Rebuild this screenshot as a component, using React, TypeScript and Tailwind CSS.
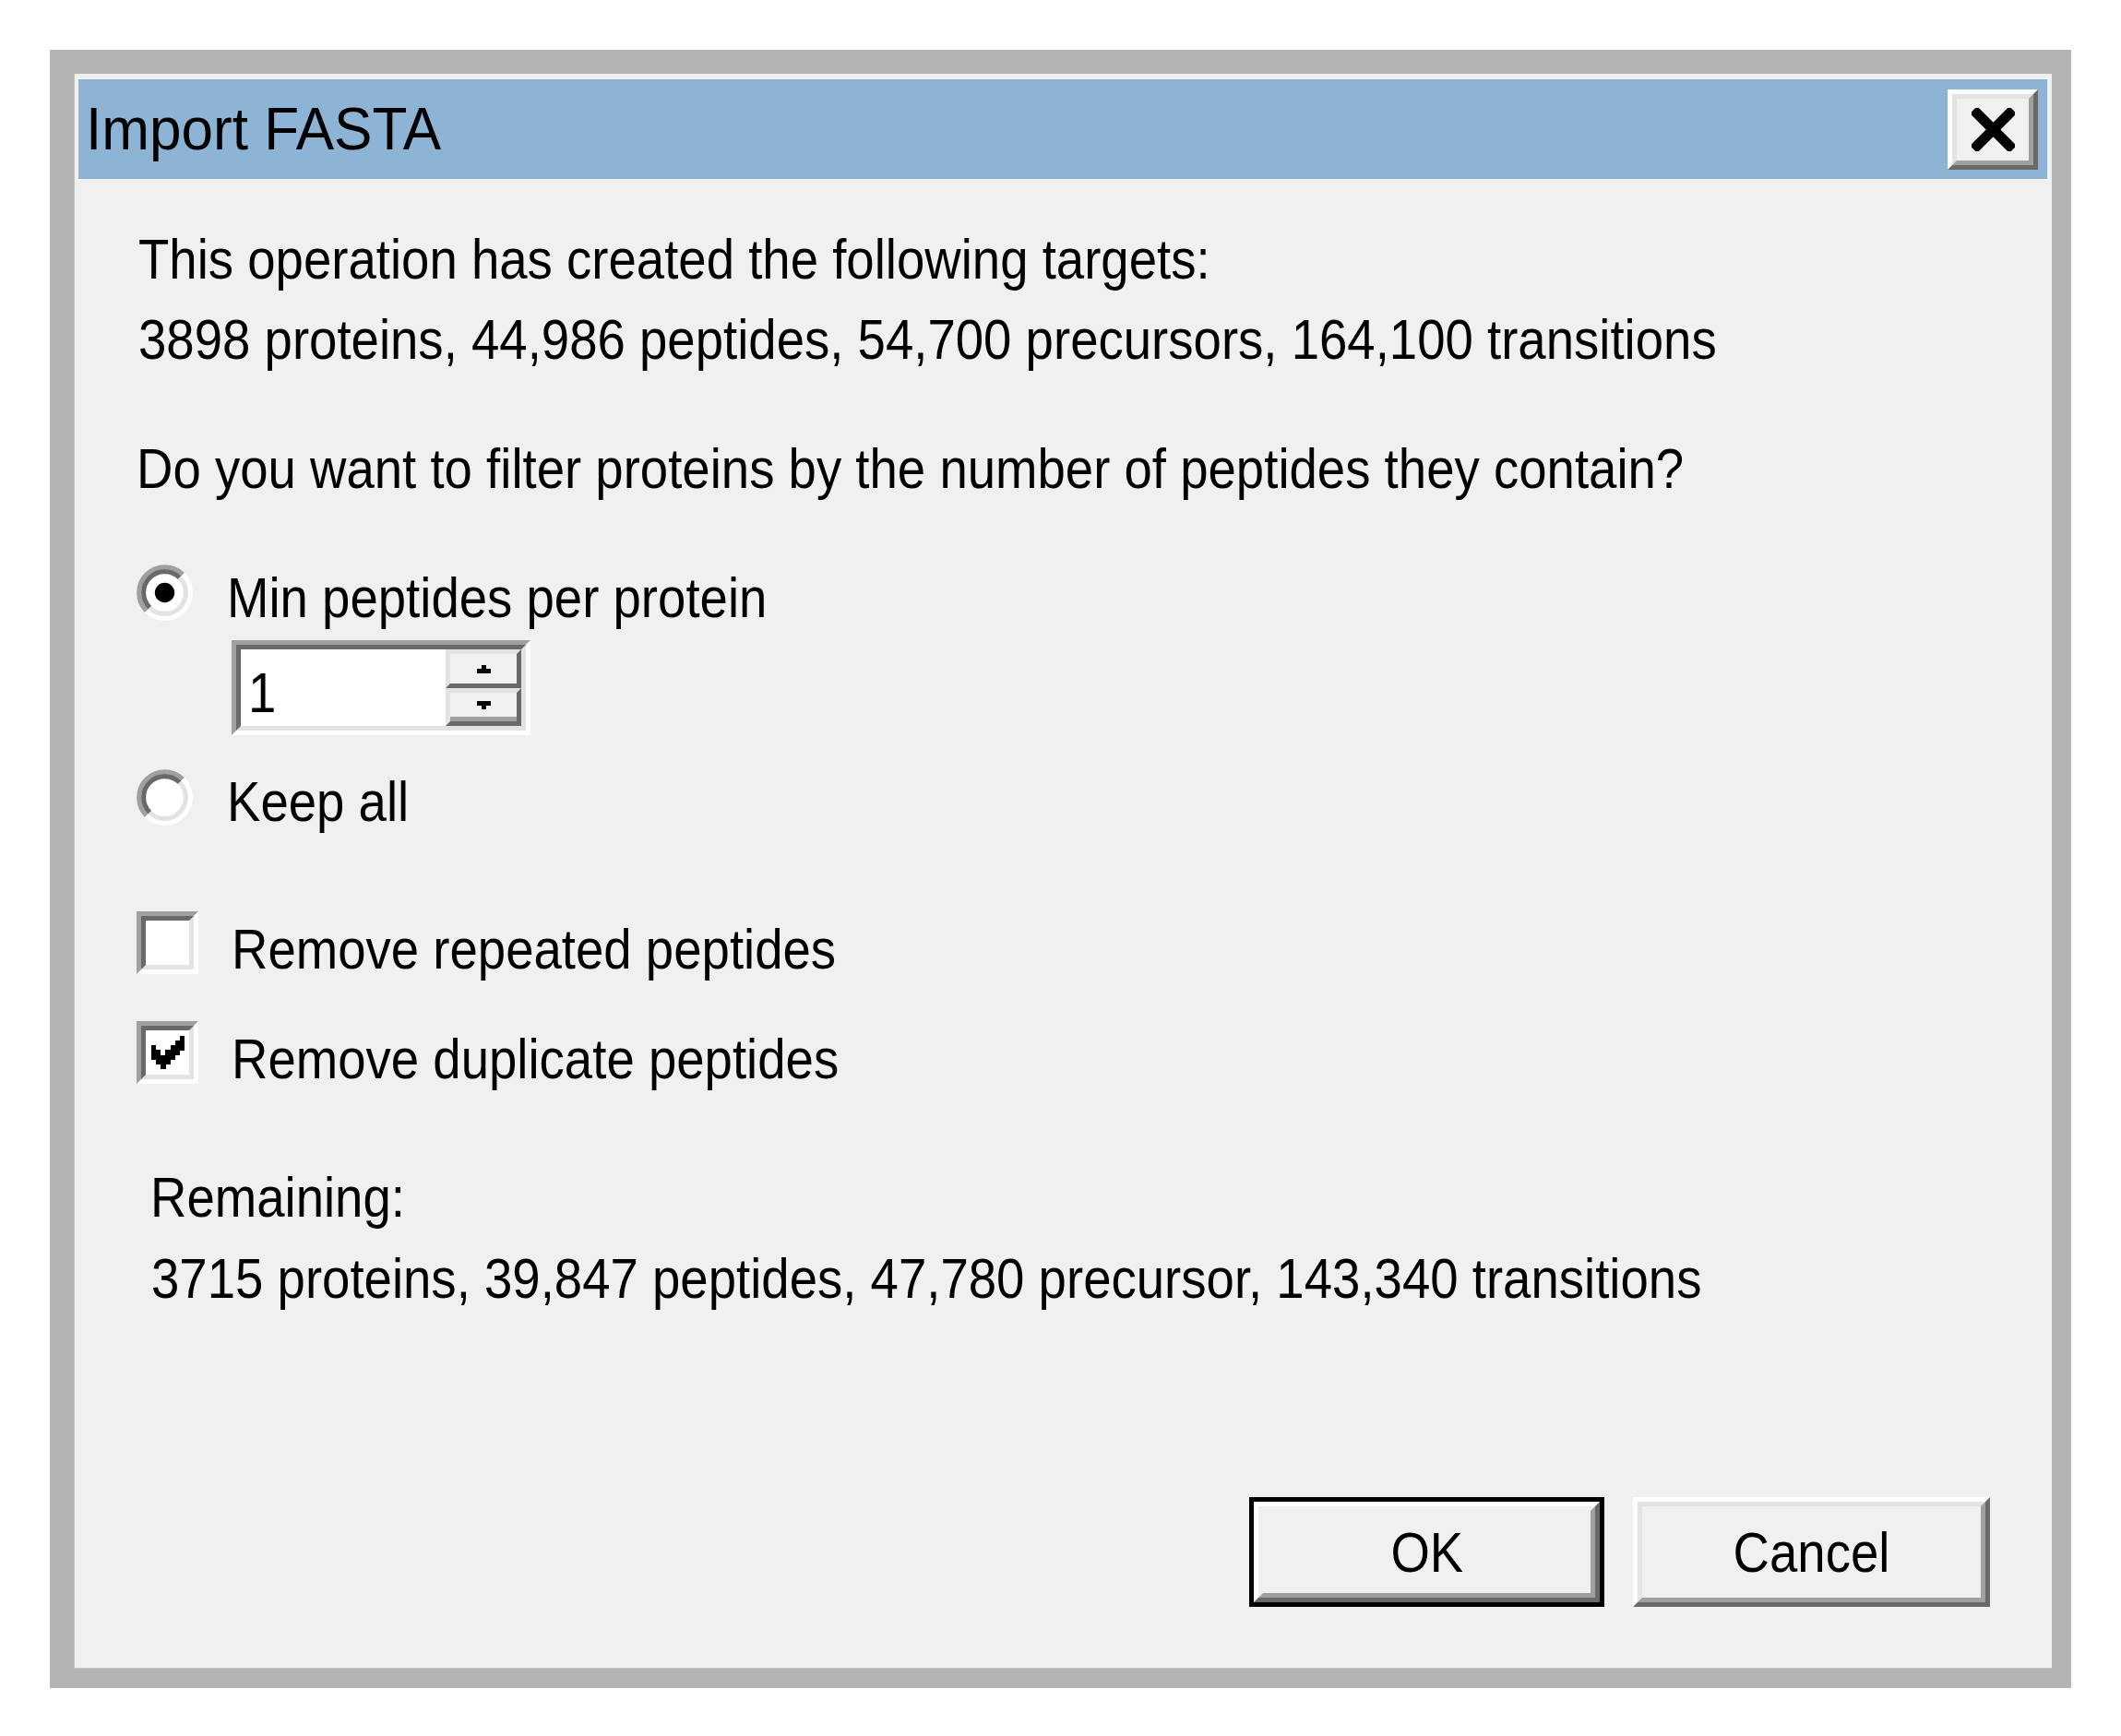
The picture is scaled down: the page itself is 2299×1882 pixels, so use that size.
import React from "react";

const T = "origin-left scale-x-[0.88] whitespace-nowrap text-[62px] leading-[87px] text-black";

function Radio({ checked }: { checked?: boolean }) {
  const a = 3.889;
  const b = 3.182;
  return (
    <svg width="61" height="61" viewBox="0 0 12 12" className="shrink-0 block">
      <circle cx="6" cy="6" r="5" fill="#ffffff" />
      <path d={`M ${6 - a} ${6 + a} A 5.5 5.5 0 0 1 ${6 + a} ${6 - a}`} stroke="#a0a0a0" strokeWidth="1" fill="none" />
      <path d={`M ${6 + a} ${6 - a} A 5.5 5.5 0 0 1 ${6 - a} ${6 + a}`} stroke="#ffffff" strokeWidth="1" fill="none" />
      <path d={`M ${6 - b} ${6 + b} A 4.5 4.5 0 0 1 ${6 + b} ${6 - b}`} stroke="#696969" strokeWidth="1" fill="none" />
      <path d={`M ${6 + b} ${6 - b} A 4.5 4.5 0 0 1 ${6 - b} ${6 + b}`} stroke="#e3e3e3" strokeWidth="1" fill="none" />
      {checked && <circle cx="6" cy="6" r="2.1" fill="#000000" />}
    </svg>
  );
}

const CHECK = [
  "......X",
  ".....XX",
  "X...XXX",
  "XX.XXX.",
  "XXXXX..",
  ".XXX...",
  "..X....",
];

function Checkbox({ checked }: { checked?: boolean }) {
  return (
    <div className="shrink-0 w-[67px] h-[68px] border-[5px] border-t-[#a0a0a0] border-l-[#a0a0a0] border-b-white border-r-white">
      <div className="w-full h-full border-[5px] border-t-[#696969] border-l-[#696969] border-b-[#e3e3e3] border-r-[#e3e3e3] bg-white flex items-center justify-center">
        {checked && (
          <svg width="36" height="36" viewBox="0 0 7 7" shapeRendering="crispEdges" className="block">
            {CHECK.flatMap((row, y) =>
              row.split("").map((c, x) =>
                c === "X" ? <rect key={`${x}-${y}`} x={x} y={y} width="1.02" height="1.02" fill="#000" /> : null
              )
            )}
          </svg>
        )}
      </div>
    </div>
  );
}

function Spinner() {
  return (
    <div className="mt-[3px] ml-[103px] w-[324px] h-[103px] border-[5px] border-t-[#a0a0a0] border-l-[#a0a0a0] border-b-white border-r-white">
      <div className="w-full h-full border-[5px] border-t-[#696969] border-l-[#696969] border-b-[#e3e3e3] border-r-[#e3e3e3] flex">
        <div className="flex-1 bg-white h-full overflow-hidden pl-[8px] pt-[5px]">
          <div className="origin-left scale-x-[0.88] text-[62px] leading-[83px] text-black">1</div>
        </div>
        <div className="w-[82px] h-full flex flex-col">
          <div className="h-[42px] border-[5px] border-t-[#e3e3e3] border-l-[#e3e3e3] border-b-[#696969] border-r-[#696969] bg-[#f0f0f0] flex items-center justify-center">
            <svg width="15" height="9" viewBox="0 0 15 9" shapeRendering="crispEdges" className="block">
              <rect x="5" y="0" width="5" height="4" fill="#000" />
              <rect x="0" y="4" width="15" height="5" fill="#000" />
            </svg>
          </div>
          <div className="flex-1 border-[5px] border-t-[#e3e3e3] border-l-[#e3e3e3] border-b-[#696969] border-r-[#696969] bg-[#f0f0f0]">
            <div className="w-full h-full border-b-[5px] border-b-[#a0a0a0] flex items-center justify-center">
              <svg width="15" height="9" viewBox="0 0 15 9" shapeRendering="crispEdges" className="block">
                <rect x="0" y="0" width="15" height="5" fill="#000" />
                <rect x="5" y="5" width="5" height="4" fill="#000" />
              </svg>
            </div>
          </div>
        </div>
      </div>
    </div>
  );
}

function CloseButton() {
  return (
    <div className="w-[98px] h-[87px] border-[5px] border-t-white border-l-white border-b-[#696969] border-r-[#696969]">
      <div className="w-full h-full border-[5px] border-t-[#e3e3e3] border-l-[#e3e3e3] border-b-[#a0a0a0] border-r-[#a0a0a0] bg-[#f0f0f0] flex items-center justify-center">
        <svg width="47" height="47" viewBox="0 0 47 47" className="block">
          <path d="M6 6 L41 41 M41 6 L6 41" stroke="#000" strokeWidth="11" strokeLinecap="square" />
        </svg>
      </div>
    </div>
  );
}

export default function App() {
  return (
    <div className="w-[2299px] h-[1882px] bg-white pl-[54px] pt-[54px] font-['Liberation_Sans',Arial,sans-serif]">
      <div className="w-[2191px] h-[1776px] bg-[#b4b4b4] pt-[26px] pl-[26px] pr-[21px] pb-[21px]">
        <div className="w-full h-full bg-[#f0f0f0] border-l border-b border-[#c4c4c4] flex flex-col">
          {/* Title bar */}
          <div className="mt-[6px] ml-[4px] mr-[5px] h-[108px] bg-[#8eb4d5] flex items-center justify-between pl-[8px] pr-[10px]">
            <div className="origin-left scale-x-[0.97] whitespace-nowrap text-[64px] leading-[108px] text-black">Import FASTA</div>
            <CloseButton />
          </div>

          {/* Content */}
          <div className="flex flex-col pl-[67px] flex-1">
            <div className={`mt-[43px] ml-[2px] ${T}`}>This operation has created the following targets:</div>
            <div className={`ml-[2px] ${T}`}>3898 proteins, 44,986 peptides, 54,700 precursors, 164,100 transitions</div>
            <div className={`mt-[53px] ml-[0px] ${T}`}>Do you want to filter proteins by the number of peptides they contain?</div>

            <div className="mt-[53px] flex items-start">
              <div className="mt-[8px]"><Radio checked /></div>
              <div className={`ml-[37px] ${T}`}>Min peptides per protein</div>
            </div>
            <Spinner />
            <div className="mt-[28px] flex items-start">
              <div className="mt-[9px]"><Radio /></div>
              <div className={`ml-[37px] ${T}`}>Keep all</div>
            </div>

            <div className="mt-[73px] flex items-start">
              <div className="mt-[3px]"><Checkbox /></div>
              <div className={`ml-[36px] ${T}`}>Remove repeated peptides</div>
            </div>
            <div className="mt-[32px] flex items-start">
              <div className="mt-[3px]"><Checkbox checked /></div>
              <div className={`ml-[36px] ${T}`}>Remove duplicate peptides</div>
            </div>

            <div className={`mt-[63px] ml-[15px] ${T}`}>Remaining:</div>
            <div className={`mt-[1px] ml-[16px] ${T}`}>3715 proteins, 39,847 peptides, 47,780 precursor, 143,340 transitions</div>

            {/* Buttons */}
            <div className="mt-auto flex justify-end gap-[31px] pr-[67px] pb-[66px]">
              <div className="w-[385px] h-[119px] border-[5px] border-black">
                <div className="w-full h-full border-[5px] border-t-white border-l-white border-b-[#696969] border-r-[#696969]">
                  <div className="w-full h-full border-[5px] border-t-[#f0f0f0] border-l-[#f0f0f0] border-b-[#a0a0a0] border-r-[#a0a0a0] bg-[#f0f0f0] flex items-center justify-center">
                    <div className="scale-x-[0.88] text-[62px] leading-[70px] text-black">OK</div>
                  </div>
                </div>
              </div>
              <div className="w-[387px] h-[119px] border-[5px] border-t-white border-l-white border-b-[#696969] border-r-[#696969]">
                <div className="w-full h-full border-[5px] border-t-[#e3e3e3] border-l-[#e3e3e3] border-b-[#a0a0a0] border-r-[#a0a0a0] bg-[#f0f0f0] flex items-center justify-center">
                  <div className="scale-x-[0.88] text-[62px] leading-[70px] text-black">Cancel</div>
                </div>
              </div>
            </div>
          </div>
        </div>
      </div>
    </div>
  );
}
